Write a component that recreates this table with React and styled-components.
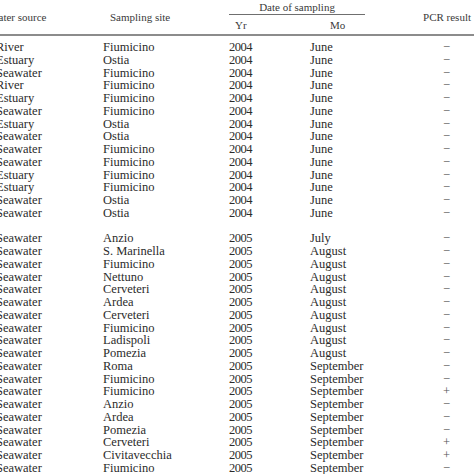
import React from 'react'
import styled, { createGlobalStyle } from 'styled-components'

const GlobalStyle = createGlobalStyle`
  html, body {
    margin: 0;
    padding: 0;
    background: #fff;
    overflow: hidden;
  }
  body {
    font-family: "Liberation Serif", "Times New Roman", serif;
    color: #2b2b2b;
  }
`

const rows2004 = [
  ['River', 'Fiumicino', '2004', 'June', '−'],
  ['Estuary', 'Ostia', '2004', 'June', '−'],
  ['Seawater', 'Fiumicino', '2004', 'June', '−'],
  ['River', 'Fiumicino', '2004', 'June', '−'],
  ['Estuary', 'Fiumicino', '2004', 'June', '−'],
  ['Seawater', 'Fiumicino', '2004', 'June', '−'],
  ['Estuary', 'Ostia', '2004', 'June', '−'],
  ['Seawater', 'Ostia', '2004', 'June', '−'],
  ['Seawater', 'Fiumicino', '2004', 'June', '−'],
  ['Seawater', 'Fiumicino', '2004', 'June', '−'],
  ['Estuary', 'Fiumicino', '2004', 'June', '−'],
  ['Estuary', 'Fiumicino', '2004', 'June', '−'],
  ['Seawater', 'Ostia', '2004', 'June', '−'],
  ['Seawater', 'Ostia', '2004', 'June', '−'],
]

const rows2005 = [
  ['Seawater', 'Anzio', '2005', 'July', '−'],
  ['Seawater', 'S. Marinella', '2005', 'August', '−'],
  ['Seawater', 'Fiumicino', '2005', 'August', '−'],
  ['Seawater', 'Nettuno', '2005', 'August', '−'],
  ['Seawater', 'Cerveteri', '2005', 'August', '−'],
  ['Seawater', 'Ardea', '2005', 'August', '−'],
  ['Seawater', 'Cerveteri', '2005', 'August', '−'],
  ['Seawater', 'Fiumicino', '2005', 'August', '−'],
  ['Seawater', 'Ladispoli', '2005', 'August', '−'],
  ['Seawater', 'Pomezia', '2005', 'August', '−'],
  ['Seawater', 'Roma', '2005', 'September', '−'],
  ['Seawater', 'Fiumicino', '2005', 'September', '−'],
  ['Seawater', 'Fiumicino', '2005', 'September', '+'],
  ['Seawater', 'Anzio', '2005', 'September', '−'],
  ['Seawater', 'Ardea', '2005', 'September', '−'],
  ['Seawater', 'Pomezia', '2005', 'September', '−'],
  ['Seawater', 'Cerveteri', '2005', 'September', '+'],
  ['Seawater', 'Civitavecchia', '2005', 'September', '+'],
  ['Seawater', 'Fiumicino', '2005', 'September', '−'],
]

// column widths and left padding of body cells
const columns = [
  { width: 114, pad: 7 },
  { width: 126, pad: 0 },
  { width: 81, pad: 0, tight: true },
  { width: 55, pad: 0 },
  { width: 120, pad: 78, sign: true },
]

const Table = styled.table`
  margin-left: -11px;
  border-collapse: collapse;
  table-layout: fixed;
  width: ${columns.reduce((s, c) => s + c.width, 0)}px;
`

const Head = styled.thead`
  border-bottom: 2px solid #8c8c8c;
`

const HeadCell = styled.th`
  font-weight: normal;
  font-size: 11px;
  color: #3a3a3a;
  text-align: left;
  white-space: nowrap;
  padding: 0 0 0 ${p => p.$pad || 0}px;
  vertical-align: middle;
  height: ${p => p.$h || 16}px;
`

const SpanCell = styled(HeadCell)`
  text-align: center;
  padding: 0 0 1px;
  position: relative;
  height: 14px;

  &::after {
    content: '';
    position: absolute;
    left: 0;
    right: 0;
    bottom: 0;
    border-bottom: 1px solid #6f6f6f;
  }
`

const Body = styled.tbody`
  tr:first-child td {
    padding-top: 5px;
  }
`

const Cell = styled.td`
  font-size: 12.5px;
  line-height: 12.75px;
  height: 12.75px;
  padding: 0 0 0 ${p => p.$pad}px;
  white-space: nowrap;
  letter-spacing: ${p => (p.$tight ? '-0.5px' : 'normal')};
  color: ${p => (p.$sign ? '#555' : '#2b2b2b')};
`

const Row = ({ data }) => (
  <tr>
    {data.map((v, i) => (
      <Cell
        key={i}
        $pad={columns[i].pad}
        $tight={columns[i].tight}
        $sign={columns[i].sign}
      >
        {v}
      </Cell>
    ))}
  </tr>
)

export default function App() {
  return (
    <>
      <GlobalStyle />
      <Table>
        <colgroup>
          {columns.map((c, i) => (
            <col key={i} style={{ width: c.width }} />
          ))}
        </colgroup>
        <Head>
          <tr>
            <HeadCell rowSpan={2} $pad={0}>Water source</HeadCell>
            <HeadCell rowSpan={2} $pad={7}>Sampling site</HeadCell>
            <SpanCell colSpan={2}>Date of sampling</SpanCell>
            <HeadCell rowSpan={2} $pad={58}>PCR result</HeadCell>
          </tr>
          <tr>
            <HeadCell $pad={6} $h={19}>Yr</HeadCell>
            <HeadCell $pad={20} $h={19}>Mo</HeadCell>
          </tr>
        </Head>
        <Body>
          {rows2004.map((r, i) => (
            <Row key={'a' + i} data={r} />
          ))}
          <Row data={['', '', '', '', '']} />
          {rows2005.map((r, i) => (
            <Row key={'b' + i} data={r} />
          ))}
        </Body>
      </Table>
    </>
  )
}
